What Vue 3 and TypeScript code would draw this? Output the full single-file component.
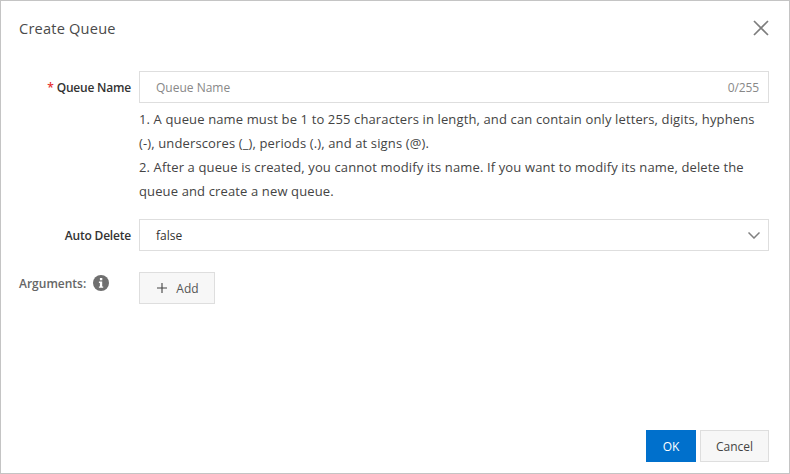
<script setup lang="ts">
const help: string[] = [
  '1. A queue name must be 1 to 255 characters in length, and can contain only letters, digits, hyphens (-), underscores (_), periods (.), and at signs (@).',
  '2. After a queue is created, you cannot modify its name. If you want to modify its name, delete the queue and create a new queue.',
]
</script>

<template>
  <div class="dialog">
    <header class="head">
      <h1 class="title">Create Queue</h1>
      <svg class="close" width="16" height="16" viewBox="0 0 16 16" aria-label="Close">
        <path d="M1 1 L15 15 M15 1 L1 15" stroke="#7d7d7d" stroke-width="1.7" fill="none" />
      </svg>
    </header>

    <main class="body">
      <div class="row">
        <label class="label"><span class="req">*</span> Queue Name</label>
        <div class="control">
          <div class="field">
            <span class="placeholder">Queue Name</span>
            <span class="count">0/255</span>
          </div>
          <div class="help">
            <p v-for="line in help" :key="line">{{ line }}</p>
          </div>
        </div>
      </div>

      <div class="row row-select">
        <label class="label">Auto Delete</label>
        <div class="control">
          <div class="field">
            <span class="value">false</span>
            <svg width="12" height="7" viewBox="0 0 12 7" class="chev">
              <path d="M0.5 0.5 L6 6 L11.5 0.5" stroke="#808080" stroke-width="1.5" fill="none" />
            </svg>
          </div>
        </div>
      </div>

      <div class="row row-args">
        <label class="label-left">
          Arguments:
          <svg class="info" width="16" height="16" viewBox="0 0 16 16">
            <circle cx="8" cy="8" r="8" fill="#6f6f6f" />
            <rect x="6.9" y="3" width="2.4" height="2.3" fill="#fff" />
            <path d="M5.9 6.6 H9.2 V11.4 H10.2 V12.8 H5.9 V11.4 H6.9 V8 H5.9 Z" fill="#fff" />
          </svg>
        </label>
        <div class="control">
          <button class="btn add" type="button">
            <svg width="10" height="10" viewBox="0 0 10 10">
              <path d="M5 0 V10 M0 5 H10" stroke="#444" stroke-width="1.1" fill="none" />
            </svg>
            <span class="add-text">Add</span>
          </button>
        </div>
      </div>
    </main>

    <footer class="foot">
      <button class="btn ok" type="button">OK</button>
      <button class="btn cancel" type="button">Cancel</button>
    </footer>
  </div>
</template>

<style>
html, body { margin: 0; padding: 0; background: #fff; }
</style>

<style scoped>
.dialog {
  box-sizing: border-box;
  width: 790px;
  height: 474px;
  border: 1px solid #c4c4c4;
  background: #fff;
  display: flex;
  flex-direction: column;
  font-family: "Open Sans", "Noto Sans", sans-serif;
  font-size: 12px;
  color: #333;
}
.head {
  display: flex;
  justify-content: space-between;
  align-items: center;
  height: 54px;
  padding: 0 20px 0 18px;
  flex: none;
}
.title {
  margin: 0;
  font-size: 14.6px;
  font-weight: 400;
  color: #4a4a4a;
  letter-spacing: 0.2px;
}
.body { flex: 1; padding-top: 16px; padding-right: 20px; }
.row { display: flex; }
.row-select { margin-top: 16px; }
.row-args { margin-top: 21px; }
.label {
  box-sizing: border-box;
  width: 138px;
  padding-right: 8px;
  height: 32px;
  line-height: 34px;
  text-align: right;
  font-weight: 600;
  color: #333;
  letter-spacing: -0.2px;
}
.label-left {
  box-sizing: border-box;
  width: 138px;
  padding-left: 18px;
  display: flex;
  align-items: center;
  gap: 7px;
  height: 22px;
  font-weight: 600;
  color: #666;
}
.req { color: #e62e2e; }
.control { flex: 1; min-width: 0; }
.field {
  box-sizing: border-box;
  height: 32px;
  border: 1px solid #dedede;
  display: flex;
  align-items: center;
  justify-content: space-between;
  padding: 0 8px 0 16px;
}
.placeholder, .count { color: #888; }
.count { padding-right: 1px; letter-spacing: -0.1px; }
.value { color: #333; }
.help {
  margin-top: 4px;
  color: #444;
  font-size: 13px;
  line-height: 24px;
  letter-spacing: 0.13px;
}
.help p { margin: 0; }
.btn {
  box-sizing: border-box;
  height: 32px;
  font: inherit;
  cursor: pointer;
}
.add {
  width: 76px;
  display: flex;
  align-items: center;
  justify-content: center;
  gap: 9px;
  padding: 0 0 0 2px;
  background: #f7f7f7;
  border: 1px solid #dedede;
  color: #555;
}
.foot {
  flex: none;
  display: flex;
  justify-content: flex-end;
  gap: 4px;
  padding: 0 20px 11px 0;
}
.ok {
  width: 50px;
  border: 0;
  background: #0070cc;
  color: #fff;
}
.cancel {
  width: 69px;
  background: #f7f7f7;
  border: 1px solid #dedede;
  color: #444;
}
</style>
